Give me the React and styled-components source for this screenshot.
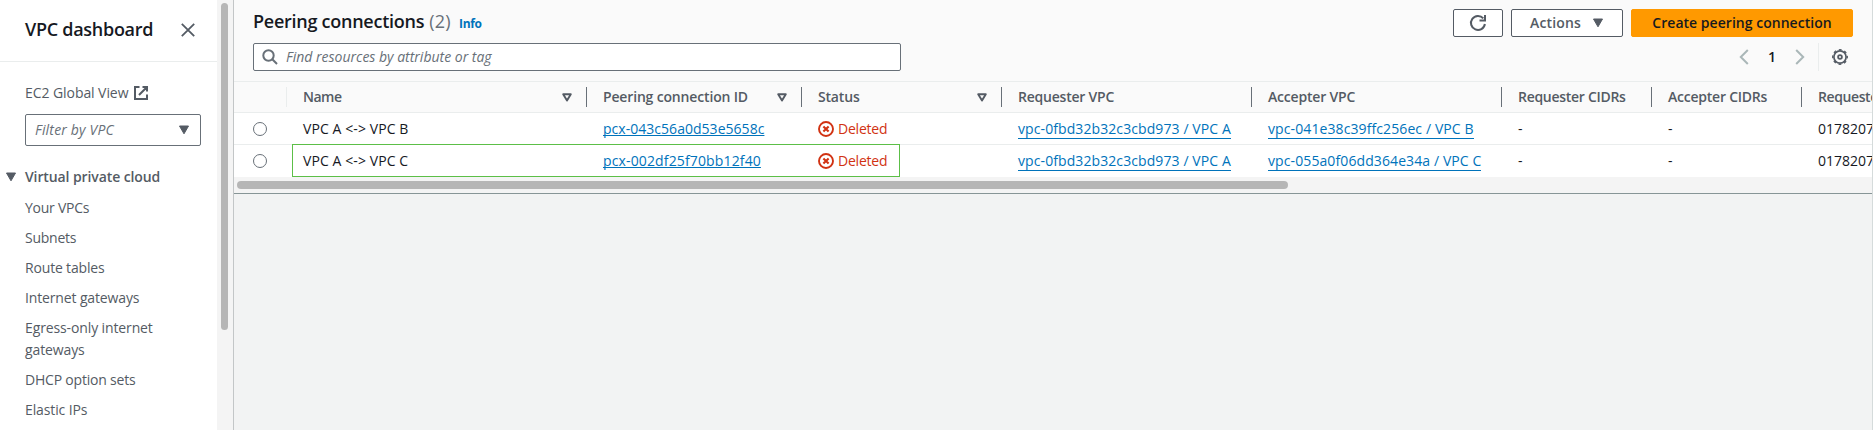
import React from "react";
import styled, { createGlobalStyle } from "styled-components";

const color = {
  text: "#16191f",
  label: "#545b64",
  muted: "#687078",
  link: "#0073bb",
  error: "#d13212",
  line: "#eaeded",
  accent: "#ff9900",
};

const GlobalStyle = createGlobalStyle`
  *, *::before, *::after { box-sizing: border-box; }
  body {
    margin: 0;
    overflow: hidden;
    font-family: "Open Sans", "Noto Sans", sans-serif;
    font-size: 14px;
    line-height: 22px;
    color: ${color.text};
  }
  svg { display: block; flex: none; }
`;

const Page = styled.div`
  display: flex;
  width: 1873px;
  height: 430px;
  overflow: hidden;
  background: #f2f3f3;
`;

const Sidebar = styled.aside`
  flex: none;
  width: 217px;
  background: #fff;
  color: ${color.label};
`;

const SidebarHeader = styled.div`
  display: flex;
  align-items: center;
  justify-content: space-between;
  height: 62px;
  padding: 0 21px 2px 25px;
  border-bottom: 1px solid ${color.line};
`;

const SidebarTitle = styled.h2`
  margin: 0;
  padding-bottom: 1px;
  font-size: 18px;
  font-weight: 600;
  letter-spacing: -0.28px;
  color: ${color.text};
`;

const SidebarBody = styled.div`
  padding: 20px 16px 0 25px;
`;

const GlobalView = styled.a`
  display: flex;
  align-items: center;
  gap: 5px;
  letter-spacing: -0.07px;
`;

const VpcFilter = styled.div`
  display: flex;
  align-items: center;
  justify-content: space-between;
  height: 32px;
  margin-top: 10px;
  padding: 0 10px 0 9px;
  border: 1px solid ${color.muted};
  border-radius: 2px;
  font-style: italic;
  letter-spacing: 0.19px;
  color: ${color.muted};
`;

const NavHeading = styled.div`
  display: flex;
  align-items: center;
  gap: 8px;
  margin: 20px 0 0 -20px;
  font-weight: 600;
  letter-spacing: -0.1px;
`;

const NavList = styled.ul`
  display: flex;
  flex-direction: column;
  gap: 8px;
  margin: 9px 0 0;
  padding: 0;
  list-style: none;
`;

const NavItem = styled.li`
  max-width: 150px;
  letter-spacing: ${(p) => p.$tracking}px;
`;

const SidebarScroll = styled.div`
  flex: none;
  width: 17px;
  padding: 3px 5px 0 4px;
  background: #f4f4f4;
  border-right: 1px solid #c3c6c7;
`;

const VerticalThumb = styled.div`
  height: 327px;
  border-radius: 4px;
  background: #b6b6b6;
`;

const Main = styled.main`
  flex: 1;
  min-width: 0;
  border-right: 1px solid #d5dbdb;
`;

const Panel = styled.section`
  height: 194px;
  overflow: hidden;
  background: #fafafa;
  border-bottom: 1px solid #879596;
`;

const PanelHeader = styled.header`
  height: 82px;
  padding: 9px 19px 0 19px;
  border-bottom: 1px solid ${color.line};
`;

const Bar = styled.div`
  display: flex;
  align-items: center;
  justify-content: space-between;
  height: 28px;
  margin-bottom: 6px;
`;

const Heading = styled.h1`
  display: flex;
  align-items: baseline;
  margin: 0;
  padding-bottom: 2px;
  font-size: 18px;
  font-weight: 600;
  letter-spacing: -0.26px;
`;

const Count = styled.span`
  margin-left: 5px;
  font-weight: 400;
  letter-spacing: 0.3px;
  color: ${color.muted};
`;

const Info = styled.a`
  margin-left: 8px;
  font-size: 12px;
  font-weight: 700;
  letter-spacing: -0.3px;
  color: ${color.link};
`;

const Actions = styled.div`
  display: flex;
  gap: 8px;
`;

const Button = styled.button`
  display: flex;
  align-items: center;
  justify-content: center;
  gap: 11px;
  width: ${(p) => p.$width}px;
  height: 28px;
  padding: 0;
  border: 1px solid ${(p) => (p.$primary ? color.accent : color.label)};
  border-radius: 2px;
  background: ${(p) => (p.$primary ? color.accent : "#fff")};
  color: ${(p) => (p.$primary ? color.text : color.label)};
  font: inherit;
  font-weight: 600;
  letter-spacing: ${(p) => (p.$primary ? 0.03 : 0.16)}px;
`;

const Search = styled.div`
  display: flex;
  align-items: center;
  gap: 8px;
  width: 648px;
  height: 28px;
  padding: 0 8px;
  border: 1px solid ${color.muted};
  border-radius: 2px;
  background: #fff;
  font-style: italic;
  color: ${color.muted};
`;

const Pagination = styled.div`
  display: flex;
  align-items: center;
  height: 28px;
  padding-right: 5px;
`;

const PageNumber = styled.span`
  width: 46px;
  text-align: center;
  font-weight: 600;
`;

const Divider = styled.span`
  width: 1px;
  height: 28px;
  margin: 0 13px 0 13px;
  background: ${color.line};
`;

const columns = "53px 300px 215px 200px 250px 250px 150px 150px 150px";

const Table = styled.div`
  position: relative;
`;

const HeadRow = styled.div`
  display: grid;
  grid-template-columns: ${columns};
  align-items: center;
  height: 31px;
  border-bottom: 1px solid ${color.line};
`;

const HeadCell = styled.div`
  display: flex;
  align-items: center;
  justify-content: space-between;
  height: 20px;
  padding: 0 14px 0 16px;
  border-right: 1px solid ${(p) => (p.$light ? color.line : color.muted)};
  font-weight: 600;
  letter-spacing: ${(p) => p.$tracking || 0}px;
  white-space: nowrap;
  color: ${color.label};
`;

const Row = styled.div`
  display: grid;
  grid-template-columns: ${columns};
  align-items: center;
  height: 32px;
  background: #fff;
  border-bottom: 1px solid ${(p) => (p.$last ? "#fff" : color.line)};
`;

const Cell = styled.div`
  display: flex;
  align-items: center;
  padding-left: 16px;
  white-space: nowrap;
  letter-spacing: ${(p) => p.$tracking || 0}px;
`;

const RadioCell = styled.div`
  padding-left: 19px;
`;

const Radio = styled.span`
  display: block;
  width: 14px;
  height: 14px;
  border: 1px solid ${color.muted};
  border-radius: 50%;
  background: #fff;
`;

const IdLink = styled.a`
  color: ${color.link};
  text-decoration: underline;
  text-decoration-thickness: 1px;
  text-decoration-skip-ink: none;
  text-underline-offset: 1px;
`;

const VpcLink = styled.a`
  height: 20px;
  margin-top: 1px;
  line-height: 19px;
  color: ${color.link};
  border-bottom: 1px solid ${color.link};
`;

const Status = styled.span`
  display: flex;
  align-items: center;
  gap: 4px;
  letter-spacing: -0.22px;
  color: ${color.error};
`;

/* Outline drawn over the second row to call it out. */
const Highlight = styled.div`
  position: absolute;
  left: 58px;
  top: 62px;
  width: 608px;
  height: 33px;
  border: 1px solid #5cbf47;
  pointer-events: none;
`;

const HorizontalScroll = styled.div`
  height: 17px;
  padding: 4px 0 0 3px;
  background: #f4f4f4;
`;

const HorizontalThumb = styled.div`
  width: 1051px;
  height: 8px;
  border-radius: 4px;
  background: #b6b6b6;
`;

const CloseIcon = () => (
  <svg width="16" height="16" viewBox="0 0 16 16" stroke={color.label} strokeWidth="1.8">
    <path d="M1.800 1.800l12.400 12.400M14.200 1.800L1.800 14.200" />
  </svg>
);

const ExternalIcon = () => (
  <svg width="16" height="16" viewBox="0 0 16 16" fill="none" stroke={color.label} strokeWidth="2">
    <path d="M6.500 2H2v12h12V9.500M9.500 2H14v4.500M14 2L6 10" />
  </svg>
);

const CaretIcon = () => (
  <svg width="12" height="10" viewBox="0 0 12 10" fill={color.label} stroke={color.label} strokeLinejoin="round">
    <path d="M1.500 1h9L6 8.800z" />
  </svg>
);

const SortIcon = () => (
  <svg width="10" height="9" viewBox="0 0 10 9" fill="none" stroke={color.label} strokeWidth="1.900" strokeLinejoin="round">
    <path d="M1.200 1.200h7.600L5 7.500z" />
  </svg>
);

const SearchIcon = () => (
  <svg width="16" height="16" viewBox="0 0 16 16" fill="none" stroke={color.muted} strokeWidth="2">
    <circle cx="6.500" cy="6.500" r="5.200" />
    <path d="M10.300 10.300L15 15" />
  </svg>
);

const RefreshIcon = () => (
  <svg width="18" height="18" viewBox="0 0 18 18" fill="none" stroke={color.label} strokeWidth="2">
    <path d="M15.900 10a7 7 0 1 1-1.600-5.600" />
    <path d="M16 1v5.500h-5.500" />
  </svg>
);

const ChevronIcon = ({ right }) => (
  <svg width="10" height="16" viewBox="0 0 10 16" fill="none" stroke="#aab7b8" strokeWidth="2">
    <path d={right ? "M1.200 1l7 7-7 7" : "M8.800 1l-7 7 7 7"} />
  </svg>
);

const GearIcon = () => (
  <svg width="16" height="16" viewBox="0 0 16 16" fill="none" stroke={color.label}>
    <circle cx="8" cy="8" r="6.100" strokeWidth="1.700" />
    <circle cx="8" cy="8" r="7.300" strokeWidth="1.300" strokeDasharray="2.867 2.867" strokeDashoffset="1.433" />
    <circle cx="8" cy="8" r="1.900" strokeWidth="1.800" />
  </svg>
);

const ErrorIcon = () => (
  <svg width="16" height="16" viewBox="0 0 16 16" fill="none" stroke={color.error}>
    <circle cx="8" cy="8" r="7" strokeWidth="1.900" />
    <path d="M5.400 5.400l5.200 5.200M10.600 5.400l-5.200 5.200" strokeWidth="2.100" />
  </svg>
);

const navItems = [
  ["Your VPCs", -0.25],
  ["Subnets", -0.25],
  ["Route tables", -0.17],
  ["Internet gateways", -0.14],
  ["Egress-only internet gateways", -0.12],
  ["DHCP option sets", -0.2],
  ["Elastic IPs", -0.12],
];

const headings = [
  { label: "Name", tracking: -0.5, sortable: true },
  { label: "Peering connection ID", tracking: -0.16, sortable: true },
  { label: "Status", tracking: -0.18, sortable: true },
  { label: "Requester VPC", tracking: -0.22 },
  { label: "Accepter VPC", tracking: -0.19 },
  { label: "Requester CIDRs", tracking: -0.29 },
  { label: "Accepter CIDRs", tracking: -0.23 },
  { label: "Requester owner ID", tracking: -0.4 },
];

const connections = [
  {
    name: "VPC A <-> VPC B",
    id: "pcx-043c56a0d53e5658c",
    requester: "vpc-0fbd32b32c3cbd973 / VPC A",
    accepter: "vpc-041e38c39ffc256ec / VPC B",
    tracking: 0.03,
  },
  {
    name: "VPC A <-> VPC C",
    id: "pcx-002df25f70bb12f40",
    requester: "vpc-0fbd32b32c3cbd973 / VPC A",
    accepter: "vpc-055a0f06dd364e34a / VPC C",
    tracking: 0.14,
  },
];

export default function App() {
  return (
    <Page>
      <GlobalStyle />
      <Sidebar>
        <SidebarHeader>
          <SidebarTitle>VPC dashboard</SidebarTitle>
          <CloseIcon />
        </SidebarHeader>
        <SidebarBody>
          <GlobalView>
            EC2 Global View
            <ExternalIcon />
          </GlobalView>
          <VpcFilter>
            Filter by VPC
            <CaretIcon />
          </VpcFilter>
          <NavHeading>
            <CaretIcon />
            Virtual private cloud
          </NavHeading>
          <NavList>
            {navItems.map(([label, tracking]) => (
              <NavItem key={label} $tracking={tracking}>
                {label}
              </NavItem>
            ))}
          </NavList>
        </SidebarBody>
      </Sidebar>
      <SidebarScroll>
        <VerticalThumb />
      </SidebarScroll>
      <Main>
        <Panel>
          <PanelHeader>
            <Bar>
              <Heading>
                Peering connections
                <Count>(2)</Count>
                <Info>Info</Info>
              </Heading>
              <Actions>
                <Button $width={50} aria-label="Refresh">
                  <RefreshIcon />
                </Button>
                <Button $width={112}>
                  Actions
                  <CaretIcon />
                </Button>
                <Button $width={222} $primary>
                  Create peering connection
                </Button>
              </Actions>
            </Bar>
            <Bar>
              <Search>
                <SearchIcon />
                Find resources by attribute or tag
              </Search>
              <Pagination>
                <ChevronIcon />
                <PageNumber>1</PageNumber>
                <ChevronIcon right />
                <Divider />
                <GearIcon />
              </Pagination>
            </Bar>
          </PanelHeader>
          <Table>
            <HeadRow>
              <HeadCell $light />
              {headings.map((h) => (
                <HeadCell key={h.label} $tracking={h.tracking}>
                  {h.label}
                  {h.sortable && <SortIcon />}
                </HeadCell>
              ))}
            </HeadRow>
            {connections.map((c, i) => (
              <Row key={c.id} $last={i === connections.length - 1}>
                <RadioCell>
                  <Radio />
                </RadioCell>
                <Cell $tracking={0.09}>{c.name}</Cell>
                <Cell $tracking={c.tracking}>
                  <IdLink>{c.id}</IdLink>
                </Cell>
                <Cell>
                  <Status>
                    <ErrorIcon />
                    Deleted
                  </Status>
                </Cell>
                <Cell $tracking={0.09}>
                  <VpcLink>{c.requester}</VpcLink>
                </Cell>
                <Cell $tracking={0.1}>
                  <VpcLink>{c.accepter}</VpcLink>
                </Cell>
                <Cell>-</Cell>
                <Cell>-</Cell>
                <Cell>0178207</Cell>
              </Row>
            ))}
            <Highlight />
          </Table>
          <HorizontalScroll>
            <HorizontalThumb />
          </HorizontalScroll>
        </Panel>
      </Main>
    </Page>
  );
}
